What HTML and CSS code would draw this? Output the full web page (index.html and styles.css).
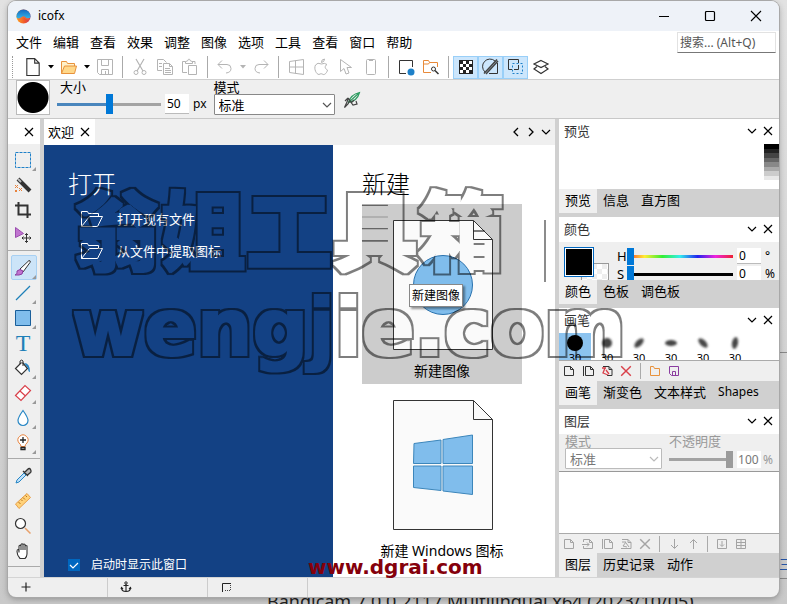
FILE: index.html
```html
<!DOCTYPE html>
<html lang="zh-CN">
<head>
<meta charset="utf-8">
<title>icofx</title>
<link rel="stylesheet" href="styles.css">
</head>
<body>
<svg class="defs" aria-hidden="true">
  <defs>
    <linearGradient id="logoTop" x1="0" y1="0" x2="0" y2="1"><stop offset="0" stop-color="#1668c0"/><stop offset="1" stop-color="#35b4e8"/></linearGradient>
    <linearGradient id="logoLow" x1="0" y1="0" x2="1" y2="0"><stop offset="0" stop-color="#ffa51f"/><stop offset=".6" stop-color="#f0542c"/><stop offset="1" stop-color="#c23a63"/></linearGradient>
    <filter id="soft" x="-50%" y="-50%" width="200%" height="200%"><feGaussianBlur stdDeviation="1"/></filter>
    <filter id="outline" x="-5%" y="-10%" width="110%" height="120%">
      <feMorphology in="SourceAlpha" operator="dilate" radius="3" result="outer"/>
      <feMorphology in="SourceAlpha" operator="dilate" radius="1" result="inner"/>
      <feComposite in="outer" in2="inner" operator="out"/>
    </filter>
    <symbol id="page" viewBox="0 0 16 16"><path d="M2.500.5h7l4 4v11h-11zM9.500.5v4h4" fill="none" stroke="currentColor"/></symbol>
    <symbol id="close" viewBox="0 0 10 10"><path d="M1 1l8 8M9 1l-8 8" fill="none" stroke="currentColor" stroke-width="1.200"/></symbol>
    <symbol id="chev" viewBox="0 0 10 10"><path d="M1 3l4 4 4-4" fill="none" stroke="currentColor" stroke-width="1.200"/></symbol>
    <symbol id="drop" viewBox="0 0 6 4"><path d="M0 0h6L3 3.500z" fill="currentColor"/></symbol>
    <symbol id="folder" viewBox="0 0 22 16"><path d="M.5 15.500V.5h6l1 2h10v3M.5 15.500h16l5-10h-13l-8 10" fill="none" stroke="currentColor"/></symbol>
    <symbol id="mini" viewBox="0 0 12 12"><path d="M1.500 1.500h6l3 3v6h-9zM7.500 1.500v3h3" fill="none" stroke="currentColor"/></symbol>
    <symbol id="minidup" viewBox="0 0 12 12"><path d="M1.500 1v10M3.500 1.500h5l3 3v6h-8zM8.500 1.500v3h3" fill="none" stroke="currentColor"/></symbol>
  </defs>
</svg>
<div class="desktop">
  <main class="window">
    <header class="titlebar">
      <svg class="logo" viewBox="0 0 16 16"><circle cx="8" cy="8" r="7.500" fill="url(#logoLow)"/><path d="M.5 8A7.500 7.500 0 0 1 15.500 8c0 1.500-1.500 2-3 2-2 0-2.500-2-4.500-2S5 10 3 10C1.500 10 .5 9.500.5 8z" fill="url(#logoTop)"/><path d="M2.500 11c3 0 3.500-2.500 5.500-2.500s2 3 6 2" fill="none" stroke="#f4703a"/></svg>
      <h1>icofx</h1>
      <div class="winctl">
        <button aria-label="最小化"><svg viewBox="0 0 12 12"><path d="M1 6.500h10" stroke="#000"/></svg></button>
        <button aria-label="最大化"><svg viewBox="0 0 12 12"><rect x="1.500" y="1.500" width="9" height="9" rx="1" fill="none" stroke="#000" stroke-width="1.200"/></svg></button>
        <button aria-label="关闭"><svg viewBox="0 0 12 12"><path d="M1 1l10 10M11 1L1 11" stroke="#000" stroke-width="1.100"/></svg></button>
      </div>
    </header>
    <nav class="menubar">
      <button>文件</button><button>编辑</button><button>查看</button><button>效果</button><button>调整</button><button>图像</button><button>选项</button><button>工具</button><button>查看</button><button>窗口</button><button>帮助</button>
      <input class="search" type="text" placeholder="搜索... (Alt+Q)" aria-label="搜索">
    </nav>
    <div class="toolbar">
      <span class="grip"></span>
      <button aria-label="新建"><svg class="i18"><use href="#page"/></svg></button>
      <button class="dd" aria-label="新建选项"><svg><use href="#drop"/></svg></button>
      <button aria-label="打开"><svg class="i18" viewBox="0 0 18 18"><path d="M1.500 15.500v-12h5l1 2h7v3" fill="#fff1c9" stroke="#e8923c"/><path d="M1.500 15.500l3-7.500h12l-2 7.500z" fill="#ffd88a" stroke="#e8923c"/></svg></button>
      <button class="dd" aria-label="打开选项"><svg><use href="#drop"/></svg></button>
      <button class="off" aria-label="保存"><svg class="i18" viewBox="0 0 18 18"><path d="M1.500 1.500h15v15h-13l-2-2zM5.500 1.500v6h7v-6M5.500 16v-4.500h7V16M9.500 13v3" fill="none" stroke="currentColor"/></svg></button>
      <span class="sep"></span>
      <button class="off" aria-label="剪切"><svg class="i18" viewBox="0 0 18 18"><path d="M5 1l7 12M13 1L6 13" fill="none" stroke="currentColor" stroke-width="1.200"/><circle cx="5" cy="14.500" r="2" fill="none" stroke="currentColor"/><circle cx="13" cy="14.500" r="2" fill="none" stroke="currentColor"/></svg></button>
      <button class="off" aria-label="复制"><svg class="i18" viewBox="0 0 18 18"><path d="M6 12.500H1.500v-11h6l3 3M7.500 5.500h6l3 3v8h-9zM13.500 5.500v3h3M9 10.500h5M9 12.500h6M9 14.500h6M3 5.500h3M3 8.500h3" fill="none" stroke="currentColor"/></svg></button>
      <button class="off" aria-label="粘贴"><svg class="i18" viewBox="0 0 18 18"><path d="M6 14.500H1.500v-11h3M11 3.500h3V6M4.500 5.500v-2l2-.5q1.500-4 3 0l2 .5v2zM7.500 7.500h8v9h-8z" fill="none" stroke="currentColor"/></svg></button>
      <span class="sep"></span>
      <button class="off" aria-label="撤销"><svg class="i18" viewBox="0 0 18 18"><path d="M6 2.500L2 6.500l4 4M2 6.500h9q4 0 4 4t-5 4.500" fill="none" stroke="currentColor"/></svg></button>
      <button class="dd off" aria-label="撤销历史"><svg><use href="#drop"/></svg></button>
      <button class="off" aria-label="重做"><svg class="i18" viewBox="0 0 18 18"><path d="M12 2.500l4 4-4 4M16 6.500H7q-4 0-4 4t5 4.500" fill="none" stroke="currentColor"/></svg></button>
      <span class="sep"></span>
      <button class="off" aria-label="Windows 图标"><svg class="i18" viewBox="0 0 18 18"><path d="M2.500 3.500l14-2v15l-14-2zM2 9h14.500M8.500 2.500v13" fill="none" stroke="currentColor"/></svg></button>
      <button class="off" aria-label="苹果图标"><svg class="i18" viewBox="0 0 18 18"><path d="M15 6.500Q12.500 4.500 9.500 6 5.500 4 3.500 7c-2 4 1 9.500 3.500 9.500 1.500-1 3-1 4 0 2 .5 4-2 4.500-4.500-3-1.500-3-4-.5-5.500zM9.500 4.500q-.5-3 3-3.500 0 3-3 3.500z" fill="none" stroke="currentColor"/></svg></button>
      <button class="off" aria-label="光标"><svg class="i18" viewBox="0 0 18 18"><path d="M3.500 1.500v12l3.500-3 2 5.500 3-1-2-5.500h4.500z" fill="none" stroke="currentColor"/></svg></button>
      <button class="off" aria-label="手机"><svg class="i18" viewBox="0 0 18 18"><rect x="4.500" y="1.500" width="9" height="15" rx="1" fill="none" stroke="currentColor"/><path d="M7 2h4" stroke="currentColor" stroke-width="2"/></svg></button>
      <span class="sep"></span>
      <button aria-label="画布"><svg class="i18" viewBox="0 0 18 18"><path d="M15.500 9V2.500h-13v13H9" fill="none" stroke="#333"/><circle cx="14" cy="14" r="3.500" fill="#1e80c8"/></svg></button>
      <button aria-label="浏览"><svg class="i18" viewBox="0 0 18 18"><path d="M9 14.500H1.500v-12h5l1 2h8V9M1.500 6h5l1-1.500" fill="none" stroke="#e88a3a"/><circle cx="11.500" cy="11" r="2" fill="none" stroke="#333"/><path d="M13 12.500l3.500 3.500" stroke="#333" stroke-width="1.500"/></svg></button>
      <span class="sep"></span>
      <button class="on" aria-label="透明网格"><svg class="i18" viewBox="0 0 18 18"><path d="M2 2h14v14H2z" fill="#222"/><path d="M6 3h3v3H6zM12 3h3v3h-3zM3 6h3v3H3zM9 6h3v3H9zM6 9h3v3H6zM12 9h3v3h-3zM3 12h3v3H3zM9 12h3v3H9z" fill="#fff"/></svg></button>
      <button class="on" aria-label="抗锯齿"><svg class="i18" viewBox="0 0 18 18"><path d="M3 14a6.500 6.500 0 0 1 10-11M7 15.500h8.500V5" fill="none" stroke="#333"/><path d="M2 15.500L15 1.500M4 16L16 3" stroke="#444" stroke-width="1.500"/></svg></button>
      <button class="on" aria-label="选区"><svg class="i18" viewBox="0 0 18 18"><path d="M5 11.500H1.500v-10h10V5" fill="none" stroke="#333"/><path d="M5.500 5.500h10v10h-10z" fill="none" stroke="#1e80c8" stroke-dasharray="2 2"/><path d="M7 11.500h4.500V7" fill="none" stroke="#333"/></svg></button>
      <button aria-label="图层"><svg class="i18" viewBox="0 0 18 18"><path d="M9 2.500l7 3.500-7 3.500L2 6zM5 8.500L2 11l7 4.500 7-4.500-3-2.500" fill="none" stroke="#333" stroke-width="1.200"/></svg></button>
    </div>
    <div class="options">
      <span class="tip"></span>
      <div class="field size">
        <label for="size">大小</label>
        <div class="row"><input id="size" class="range" type="range" value="50"><input class="num" type="text" value="50" aria-label="大小数值"><span>px</span></div>
      </div>
      <div class="field mode">
        <label for="mode">模式</label>
        <div class="selectbox"><select id="mode"><option>标准</option></select><svg><use href="#chev"/></svg></div>
      </div>
      <svg class="feather" viewBox="0 0 18 18"><path d="M16.500 1.500C12 2.500 7 6 5.500 11.500 11 10.500 15 7 16.500 1.500zL5 12" fill="none" stroke="#2f9e62" stroke-width="1.200"/><path d="M1.500 16.500l4-9 1.500 1.500-2 4zM7 10l3 4 4-1-1-3M5 7l-3 3M8 12l3-3" fill="none" stroke="#444" stroke-width="1.200"/></svg>
    </div>
    <div class="work">
      <aside class="tools">
        <div class="toolhead"><button aria-label="关闭"><svg class="i10"><use href="#close"/></svg></button></div>
        <div class="toollist">
          <button class="more" aria-label="选择"><svg viewBox="0 0 18 18"><path d="M1.500 1.500h15v15h-15z" fill="none" stroke="#1e80c8" stroke-dasharray="3 1"/></svg></button>
          <button aria-label="魔棒"><svg viewBox="0 0 18 18"><path d="M4 3l12 12" stroke="#333" stroke-width="4"/><path d="M4 3l3 3" stroke="#bbb" stroke-width="2"/><path d="M1 9l3 3M4 9l-3 3M5 12l3 3M8 12l-3 3M1 14l2 2M3 14l-2 2" stroke="#e8823c"/></svg></button>
          <button aria-label="裁剪"><svg viewBox="0 0 18 18"><path d="M4.500 1v12.500H17M1 4.500h12.500V17" fill="none" stroke="#333" stroke-width="2"/></svg></button>
          <button aria-label="移动"><svg viewBox="0 0 18 18"><path d="M1.500 1.500v10l8-4z" fill="#c074d0" stroke="#9b4eae"/><path d="M12.500 7.500v9M8 12h9M11 9l1.500-1.500L14 9M11 15l1.500 1.500L14 15M9.500 10.500L8 12l1.500 1.500M15.500 10.500L17 12l-1.500 1.500" fill="none" stroke="#333"/></svg></button>
          <span class="rule"></span>
          <button class="on more" aria-label="画笔"><svg viewBox="0 0 18 18"><path d="M6 10L15 1.500q2 0 1 2L9 13z" fill="#fff" stroke="#333"/><path d="M1 16q3-1 2-4 3-3 6 0 0 4-4 4z" fill="#c074d0" stroke="#8b3da0"/></svg></button>
          <button class="more" aria-label="直线"><svg viewBox="0 0 18 18"><path d="M2 16L16 2" stroke="#1e80b8" stroke-width="1.300"/></svg></button>
          <button class="more" aria-label="矩形"><svg viewBox="0 0 18 18"><path d="M1.500 1.500h15v15h-15z" fill="#80bdec" stroke="#1a5f9a"/></svg></button>
          <button aria-label="文字"><span class="tee">T</span></button>
          <button class="more" aria-label="填充"><svg viewBox="0 0 18 18"><path d="M7.500 3.500l-6 6 6 6 6-6-5-6" fill="#fff" stroke="#333" stroke-width="1.200"/><path d="M6 5V2q2-2 3 0v5" fill="none" stroke="#333"/><path d="M10 4q6 0 6 9-2 0-2-4z" fill="#2686c4"/></svg></button>
          <button class="more" aria-label="橡皮擦"><svg viewBox="0 0 18 18"><path d="M1.500 11.500l9.500-10 5.500 5-9.500 10zM6 7l5.500 5" fill="#fff" stroke="#d9404a" stroke-width="1.200"/></svg></button>
          <button class="more" aria-label="模糊"><svg viewBox="0 0 18 18"><path d="M9 1.500q-5 7-5 10a5 5 0 0 0 10 0q0-3-5-10z" fill="#fff" stroke="#2686c4" stroke-width="1.200"/></svg></button>
          <button class="more" aria-label="减淡"><svg viewBox="0 0 18 18"><path d="M7 12.500q0-2-2-3.500a5 5 0 1 1 8 0q-2 1.500-2 3.500z" fill="#fff" stroke="#e8823c"/><path d="M9 3v6M6 6h6M7 13.500h4v2H7z" fill="none" stroke="#222" stroke-width="1.300"/></svg></button>
          <span class="rule"></span>
          <button aria-label="取色"><svg viewBox="0 0 18 18"><path d="M2 16l1-3 7-7 2 2-7 7z" fill="#bfe0fa" stroke="#2686c4"/><path d="M9 4l5 5M10.500 5.500l3-3q2-2 3 0t0 3l-3 2.500" fill="#bbb" stroke="#333" stroke-width="1.300"/></svg></button>
          <button aria-label="测量"><svg viewBox="0 0 18 18"><path d="M1.500 12L13 1.500l3.500 4L5 16.500z" fill="#ffd27a" stroke="#e8a04a"/><path d="M4.500 10l2 2M7 7.500l1.500 1.500M9 5.500l2 2M11.500 3.500L13 5" stroke="#b87420"/></svg></button>
          <button aria-label="缩放"><svg viewBox="0 0 18 18"><circle cx="6.500" cy="6.500" r="5" fill="#fff" stroke="#333" stroke-width="1.200"/><path d="M11 11l5.500 5.500" stroke="#e8a06a" stroke-width="1.500"/></svg></button>
          <button aria-label="抓手"><svg viewBox="0 0 18 18"><path d="M6 16.500q-3-3-3-7 0-2 1-2t1 3V4q1-1.500 2 0v4V2.500q1-1.500 2 0V8 2.500q1-1 2 0V8 4q1-1 2 0v8q0 2.500-2 4.500z" fill="#fff" stroke="#333" stroke-width="1.100"/></svg></button>
          <span class="rule"></span>
        </div>
      </aside>
      <section class="doc">
        <div class="doctabs">
          <div class="doctab"><span>欢迎</span><button aria-label="关闭标签"><svg class="i10"><use href="#close"/></svg></button></div>
          <div class="docnav">
            <button aria-label="上一个"><svg class="i10" viewBox="0 0 10 10"><path d="M7 1L3 5l4 4" fill="none" stroke="#000" stroke-width="1.300"/></svg></button>
            <button aria-label="下一个"><svg class="i10" viewBox="0 0 10 10"><path d="M3 1l4 4-4 4" fill="none" stroke="#000" stroke-width="1.300"/></svg></button>
            <button aria-label="列表"><svg class="i10"><use href="#chev"/></svg></button>
          </div>
        </div>
        <div class="welcome">
          <div class="open">
            <h2>打开</h2>
            <a href="#open"><svg><use href="#folder"/></svg>打开现有文件</a>
            <a href="#extract"><svg><use href="#folder"/></svg>从文件中提取图标</a>
            <label class="startup"><input type="checkbox" checked><span class="box"><svg viewBox="0 0 12 12"><path d="M2 6l3 3 5-5" fill="none" stroke="#fff" stroke-width="1.200"/></svg></span>启动时显示此窗口</label>
          </div>
          <div class="create">
            <h2>新建</h2>
            <div class="cards">
              <button class="card sel">
                <svg viewBox="0 0 100 130"><path d="M.5.5h80l19 19v110H.5z" fill="#fafafa" stroke="#333"/><path d="M80.500.5v19h19" fill="none" stroke="#333"/><circle cx="50" cy="65" r="29.500" fill="#80bdec" stroke="#2a72ae"/></svg>
                新建图像
                <span class="tooltip" role="tooltip">新建图像</span>
              </button>
              <button class="card">
                <svg viewBox="0 0 100 130"><path d="M.5.500h80l19 19v110H.5z" fill="#fafafa" stroke="#333"/><path d="M80.500.5v19h19" fill="none" stroke="#333"/><path d="M21 43.500l27-3.500v23.500H20.500zM50 39.500l29.500-4.500v28.500H50zM20.500 66H48v24.500l-27.500-3zM50 66h29.500v28.500L50 91z" fill="#80bdec" stroke="#3c86bb"/></svg>
                新建 Windows 图标
              </button>
            </div>
            <span class="scroll"></span>
          </div>
        </div>
      </section>
      <aside class="panels">
        <section class="panel">
          <header><h3>预览</h3><button aria-label="折叠"><svg class="i10"><use href="#chev"/></svg></button><button aria-label="关闭"><svg class="i10"><use href="#close"/></svg></button></header>
          <div class="preview"><span class="ramp"></span></div>
          <div class="tabs"><button class="cur">预览</button><button>信息</button><button>直方图</button></div>
        </section>
        <section class="panel">
          <header><h3>颜色</h3><button aria-label="折叠"><svg class="i10"><use href="#chev"/></svg></button><button aria-label="关闭"><svg class="i10"><use href="#close"/></svg></button></header>
          <div class="colour">
            <div class="swatch"><span class="back"></span><span class="fore"></span></div>
            <div class="hs">
              <div class="row"><label for="hue">H</label><input id="hue" class="range hue" type="range" value="0"><input class="num" type="text" value="0" aria-label="H"><span>°</span></div>
              <div class="row"><label for="sat">S</label><input id="sat" class="range sat" type="range" value="0"><input class="num" type="text" value="0" aria-label="S"><span>%</span></div>
            </div>
          </div>
          <div class="tabs"><button class="cur">颜色</button><button>色板</button><button>调色板</button></div>
        </section>
        <section class="panel">
          <header><h3>画笔</h3><button aria-label="折叠"><svg class="i10"><use href="#chev"/></svg></button><button aria-label="关闭"><svg class="i10"><use href="#close"/></svg></button></header>
          <div class="brushes">
            <button class="pick"><svg viewBox="0 0 20 20"><circle cx="10" cy="10" r="8"/></svg>30</button>
            <button><svg viewBox="0 0 20 20"><circle cx="10" cy="10" r="5" fill="#444" filter="url(#soft)"/></svg>30</button>
            <button><svg viewBox="0 0 20 20"><ellipse cx="10" cy="10" rx="6" ry="3" transform="rotate(-45 10 10)" fill="#444" filter="url(#soft)"/></svg>30</button>
            <button><svg viewBox="0 0 20 20"><ellipse cx="10" cy="10" rx="6" ry="3" fill="#444" filter="url(#soft)"/></svg>30</button>
            <button><svg viewBox="0 0 20 20"><ellipse cx="10" cy="10" rx="6" ry="3" transform="rotate(45 10 10)" fill="#444" filter="url(#soft)"/></svg>30</button>
            <button><svg viewBox="0 0 20 20"><ellipse cx="10" cy="10" rx="6" ry="3" transform="rotate(-80 10 10)" fill="#444" filter="url(#soft)"/></svg>30</button>
          </div>
          <div class="minibar">
            <button aria-label="新建画笔"><svg><use href="#mini"/></svg></button>
            <button aria-label="复制画笔"><svg><use href="#minidup"/></svg></button>
            <button aria-label="编辑画笔"><svg viewBox="0 0 12 12"><path d="M2 1.500h6l3 3v6H6M8 1.500v3h3" fill="none" stroke="#333"/><path d="M1 3h4M4 3L2 8l5 2M5 5l3 4" fill="none" stroke="#d9404a" stroke-width="1.300"/></svg></button>
            <button class="red" aria-label="删除画笔"><svg><use href="#close"/></svg></button>
            <span class="sep"></span>
            <button aria-label="打开画笔"><svg viewBox="0 0 12 12"><path d="M1.500 10.500v-9h3l1 2h5v7z" fill="none" stroke="#e8923c"/></svg></button>
            <button aria-label="保存画笔"><svg viewBox="0 0 12 12"><path d="M1.500 1.500h9v9h-7l-2-2zM4.500 10.500v-4h3v4" fill="none" stroke="#8b3da0"/></svg></button>
          </div>
          <div class="tabs"><button class="cur">画笔</button><button>渐变色</button><button>文本样式</button><button class="latin">Shapes</button></div>
        </section>
        <section class="panel layers">
          <header><h3>图层</h3><button aria-label="折叠"><svg class="i10"><use href="#chev"/></svg></button><button aria-label="关闭"><svg class="i10"><use href="#close"/></svg></button></header>
          <div class="blend">
            <div class="field lmode"><label for="lmode">模式</label><div class="selectbox"><select id="lmode" disabled><option>标准</option></select><svg><use href="#chev"/></svg></div></div>
            <div class="field"><label for="opacity">不透明度</label><div class="row"><input id="opacity" class="range dim" type="range" value="100" disabled><input class="num" type="text" value="100" aria-label="不透明度数值" disabled><span>%</span></div></div>
          </div>
          <div class="list"></div>
          <div class="minibar off">
            <button aria-label="新建图层"><svg><use href="#mini"/></svg></button>
            <button aria-label="导入图层"><svg viewBox="0 0 12 12"><path d="M1.500 4V1.500h6l3 3v6h-9V8M7.500 1.500v3h3M0 6.500h7M5 4.500l2 2-2 2" fill="none" stroke="currentColor"/></svg></button>
            <button aria-label="复制图层"><svg><use href="#minidup"/></svg></button>
            <button aria-label="编辑图层"><svg viewBox="0 0 12 12"><path d="M2 1.500h6l3 3v6H1M8 1.500v3h3M2 4h4L3 8l4 1M6 5l3 4" fill="none" stroke="currentColor"/></svg></button>
            <button aria-label="删除图层"><svg><use href="#close"/></svg></button>
            <span class="sep"></span>
            <button aria-label="下移"><svg viewBox="0 0 12 12"><path d="M6.500 1v9M3 7l3.500 3.500L10 7" fill="none" stroke="currentColor"/></svg></button>
            <button aria-label="上移"><svg viewBox="0 0 12 12"><path d="M6.500 11V2M3 5l3.500-3.500L10 5" fill="none" stroke="currentColor"/></svg></button>
            <span class="sep"></span>
            <button aria-label="向下合并"><svg viewBox="0 0 12 12"><path d="M1.500 1.500h9v9h-9zM6 3v5M4 6.500l2 2 2-2" fill="none" stroke="currentColor"/></svg></button>
            <button aria-label="全部合并"><svg viewBox="0 0 12 12"><path d="M1.500 1.500h9v9h-9zM6 2v8M2 4.500h8M2 7.500h8" fill="none" stroke="currentColor"/></svg></button>
          </div>
          <div class="tabs"><button class="cur">图层</button><button>历史记录</button><button>动作</button></div>
        </section>
      </aside>
    </div>
    <footer class="status">
      <span><svg viewBox="0 0 12 12"><path d="M6 1.500v9M1.500 6h9" stroke="#222" stroke-width="1.200"/></svg></span>
      <span><svg viewBox="0 0 12 12"><circle cx="6" cy="2" r="1.200" fill="none" stroke="#222"/><path d="M6 3v8M3.500 4.500h5M1.500 7q0 3.500 4.500 3.500T10.500 7M1 8l.5-1.500L3 8M11 8l-.5-1.500L9 8" fill="none" stroke="#222" stroke-width="1.100"/></svg></span>
      <span><svg viewBox="0 0 12 12"><path d="M2.500 11V2.500H11" fill="none" stroke="#222"/><path d="M5 9.500h6M10.500 4v6" stroke="#444" stroke-dasharray="1 1"/></svg></span>
    </footer>
  </main>
  <p class="behind">Bandicam 7.0.0.2117 Multilingual x64 (2023/10/05)</p>
  <span class="edge upper"></span>
  <span class="edge lower">三</span>
  <p class="mark cn">翁姐工具箱</p>
  <p class="mark en">wengjie.com</p>
  <p class="site">www.dgrai.com</p>
</div>
</body>
</html>
```
FILE: styles.css
```css
* { box-sizing: border-box; }
body {
  margin: 0;
  font: 13px/18px "Noto Sans", "Noto Sans CJK SC", sans-serif;
  color: #000;
  background: #d6d6d6;
}
button, input, select { font: inherit; color: inherit; margin: 0; }
button { border: 0; padding: 0; background: none; display: flex; align-items: center; justify-content: center; }
h1, h2, h3, p { margin: 0; font-weight: 400; }
svg { display: block; }
.defs { position: absolute; width: 0; height: 0; }
.desktop {
  position: relative;
  height: 100vh;
  overflow: hidden;
  padding: 1px 8px 7px;
  background: linear-gradient(#e2e2e2, #c9c9c9);
}
.window {
  position: relative;
  z-index: 1;
  height: 100%;
  display: flex;
  flex-direction: column;
  background: #efefef;
  border-radius: 8px;
  overflow: hidden;
  box-shadow: 0 0 0 1px #a8a8a8, 0 2px 6px rgba(0, 0, 0, .3);
}
.row { display: flex; align-items: center; }
.i18 { width: 18px; height: 18px; }
.i10 { width: 10px; height: 10px; }

.titlebar { flex: none; height: 30px; display: flex; align-items: center; gap: 7px; padding-left: 8px; background: #eef2f8; }
.logo { width: 15px; height: 15px; }
.titlebar h1 { font-size: 12px; }
.winctl { margin-left: auto; display: flex; }
.winctl button { width: 46px; height: 28px; }
.winctl svg { width: 12px; height: 12px; }

.menubar { flex: none; height: 24px; display: flex; align-items: center; gap: 11px; padding: 0 3px 2px 8px; background: #fff; }
.search {
  margin-left: auto; width: 99px; height: 21px; padding: 0 2px;
  border: 1px solid #e2e2e2; border-bottom-color: #777; font-size: 12px; background: #fff;
}
.search::placeholder { color: #555; opacity: 1; }

.toolbar { flex: none; height: 25px; display: flex; align-items: center; padding-left: 4px; background: #fff; border-bottom: 1px solid #cfcfcf; color: #333; }
.toolbar button { width: 25px; height: 23px; }
.toolbar .dd { width: 11px; color: #000; }
.dd svg { width: 6px; height: 4px; }
.toolbar .off, .toolbar .dd.off { color: #b4b4b4; }
.toolbar .on { background: #cce6fc; border: 1px solid #99cff8; }
.grip { width: 1px; height: 22px; margin-right: 7px; border-left: 1px dotted #999; }
.sep { flex: none; width: 10px; height: 22px; background: linear-gradient(#aaa, #aaa) 5px 0 / 1px 100% no-repeat; }

.options { flex: none; height: 39px; display: flex; align-items: flex-start; padding-left: 8px; border-bottom: 1px solid #c8c8c8; }
.tip { width: 34px; height: 35px; background: radial-gradient(circle, #000 15px, #fff 16px); border: 1px solid #bbb; }
.field { display: flex; flex-direction: column; }
.field label { line-height: 14px; }
.options .field { margin-left: 7px; }
.size label { padding-left: 3px; }
.size .row { height: 20px; }
.size .range { width: 104px; margin-right: 4px; }
.size .num { width: 24px; height: 20px; margin-right: 4px; }
.size span, .num { font-size: 12px; }
.options .mode { width: 121px; }
.num { border: 0; border-bottom: 1px solid #bbb; background: #fff; padding: 0 2px; min-width: 0; }
.selectbox { position: relative; }
.selectbox select { display: block; width: 100%; height: 21px; padding: 0 4px; appearance: none; background: #fff; border: 1px solid #888; border-radius: 1px; }
.selectbox svg { position: absolute; right: 3px; top: 6px; width: 10px; height: 10px; color: #555; pointer-events: none; }
.feather { width: 18px; height: 18px; margin: 11px 0 0 8px; }

.range { appearance: none; height: 20px; background: linear-gradient(90deg, #4a86bd 50%, #a3a3a3 50%) center / 100% 3px no-repeat; }
.range::-webkit-slider-thumb { appearance: none; width: 7px; height: 20px; background: #0078d7; }
.range.hue { background-image: linear-gradient(90deg, #f33, #fe3, #3e3, #3ee, #22e, #e2d, #e23); }
.range.sat { background-image: linear-gradient(#000, #000); }
.range.dim { background-image: linear-gradient(#a3a3a3, #a3a3a3); }
.range.dim::-webkit-slider-thumb { background: #9b9b9b; height: 17px; }

.work { flex: 1; min-height: 0; display: grid; grid-template-columns: 32px minmax(0, 1fr) 220px; column-gap: 4px; background: #d0d0d0; }
.tools { background: #efefef; min-height: 0; }
.toolhead { height: 25px; background: #fff; display: flex; align-items: center; justify-content: flex-end; padding-right: 6px; }
.toollist { display: flex; flex-direction: column; padding-top: 3px; }
.toollist button { position: relative; width: 26px; height: 25px; margin-left: 3px; padding-right: 2px; border: 1px solid transparent; border-radius: 2px; }
.toollist svg { width: 18px; height: 18px; }
.toollist .on { background: #cce4f8; border-color: #a8d0f2; }
.more::after { content: ""; position: absolute; right: 0; bottom: 0; border: 2px solid #999; border-top-color: transparent; border-left-color: transparent; }
.rule { height: 8px; background: linear-gradient(#aaa, #aaa) 0 3px / 100% 1px no-repeat; }
.tee { font: 24px/24px "Liberation Serif", serif; color: #1e80b8; }

.doc { display: flex; flex-direction: column; min-width: 0; }
.doctabs { flex: none; height: 26px; display: flex; justify-content: space-between; background: #efefef; }
.doctab { display: flex; align-items: center; gap: 6px; padding: 0 5px 0 4px; background: #fff; }
.docnav { display: flex; gap: 5px; padding-right: 4px; }
.welcome { flex: 1; min-height: 0; display: grid; grid-template-columns: 289fr 222fr; background: #fff; }
.welcome h2 { font-size: 24px; line-height: 32px; font-weight: 300; }
.open { background: #134184; color: #fff; display: flex; flex-direction: column; padding: 23px 24px 3px; }
.open a { display: flex; align-items: center; gap: 14px; height: 32px; padding-left: 13px; color: #fff; text-decoration: none; }
.open a svg { width: 22px; height: 16px; }
.open h2 { margin-bottom: 3px; }
.startup { position: relative; margin-top: auto; display: flex; align-items: center; gap: 11px; font-size: 12px; }
.startup input { position: absolute; opacity: 0; width: 12px; height: 12px; }
.box { width: 12px; height: 12px; background: #0067c0; }
.create { position: relative; min-height: 0; padding: 23px 29px 0; overflow: hidden; }
.create h2 { margin-bottom: 4px; }
.card { position: relative; width: 160px; height: 180px; flex-direction: column; justify-content: flex-start; padding-top: 16px; gap: 12px; font-size: 14px; }
.card.sel { background: #ccc; }
.card svg { width: 100px; height: 130px; margin-left: 2px; }
.tooltip { position: absolute; left: 47px; top: 80px; padding: 2px; font-size: 12px; line-height: 17px; background: #fff; border: 1px solid #888; box-shadow: 2px 2px 2px rgba(0, 0, 0, .4); }
.scroll { position: absolute; right: 9px; top: 75px; width: 2px; height: 62px; background: #8c8c8c; }

.panels { display: flex; flex-direction: column; min-height: 0; }
.panel { flex: none; display: flex; flex-direction: column; background: #efefef; }
.panel header { flex: none; height: 25px; display: flex; align-items: center; gap: 6px; padding: 0 6px 2px 5px; background: #fff; }
.panel h3 { font-size: 13px; margin-right: auto; color: #333; }
.tabs { flex: none; display: flex; height: 28px; padding-bottom: 4px; background: #d0d0d0; }
.tabs button { padding: 0 6px 2px; }
.tabs .latin { font-size: 12px; }
.tabs .cur { background: #efefef; }
.preview { height: 45px; background: #fff; display: flex; justify-content: flex-end; }
.ramp { width: 15px; height: 45px; background: linear-gradient(#000 5px, #222 5px 9px, #444 9px 14px, #666 14px 18px, #888 18px 23px, #aaa 23px 27px, #ccc 27px 32px, #e8e8e8 32px 36px, #fff 36px); }
.colour { height: 38px; display: flex; overflow: hidden; padding: 5px 0 0 5px; }
.swatch { position: relative; flex: none; width: 46px; height: 44px; }
.fore { position: absolute; left: 0; top: 0; width: 30px; height: 30px; background: #000; border: 1px solid #0067c0; box-shadow: inset 0 0 0 1px #fff; }
.back { position: absolute; right: 1px; top: 16px; width: 28px; height: 28px; border: 1px solid #999; background: repeating-conic-gradient(#fff 0 25%, #eee 0 50%) 0 0 / 10px 10px; }
.hs { flex: 1; min-width: 0; padding-left: 7px; }
.hs .row { height: 18px; }
.hs label { width: 10px; }
.hs .range { flex: 1; min-width: 0; height: 17px; }
.hs .range::-webkit-slider-thumb { height: 17px; }
.hs .num { width: 24px; height: 16px; margin: 0 4px; }
.hs span { width: 14px; font-size: 12px; }
.brushes { height: 28px; overflow: hidden; display: flex; background: #fff; border-bottom: 1px solid #aaa; }
.brushes button { width: 32px; height: 34px; flex-direction: column; justify-content: flex-start; font-size: 11px; line-height: 12px; }
.brushes svg { width: 20px; height: 20px; margin-bottom: -1px; flex: none; }
.brushes .pick { background: #8cc3ef; }
.minibar { flex: none; height: 20px; display: flex; align-items: center; color: #333; }
.minibar button { width: 19px; height: 20px; }
.minibar svg { width: 12px; height: 12px; }
.minibar .sep { height: 16px; }
.minibar .red { color: #d9404a; }
.minibar.off { color: #a4a4a4; border-top: 1px solid #aaa; }
.layers { flex: 1; min-height: 0; }
.layers .tabs { height: 24px; padding: 0; }
.blend { flex: none; height: 38px; display: flex; gap: 7px; padding: 0 6px; color: #999; border-bottom: 1px solid #999; }
.blend .field + .field { flex: 1; min-width: 0; }
.blend .lmode { width: 97px; }
.blend select { border-color: #bbb; color: #777; opacity: 1; }
.blend .selectbox svg { color: #bbb; }
.blend .row { height: 24px; }
.blend .range { flex: 1; min-width: 0; }
.blend .num { width: 24px; height: 17px; margin: 0 2px 0 4px; padding: 0 1px; color: #777; border: 0; }
.blend span { font-size: 12px; }
.list { flex: 1; background: #fff; }

.status { flex: none; height: 20px; display: flex; border-top: 1px solid #d4d4d4; }
.status span { width: 100px; padding: 3px 12px; border-right: 1px solid #ccc; }
.status svg { width: 12px; height: 12px; }

.behind { position: absolute; left: 267px; bottom: -9px; font-size: 18px; line-height: 24px; white-space: nowrap; color: #222; }
.edge { position: absolute; right: 0; width: 8px; border-bottom: 1px solid #888; overflow: hidden; }
.upper { top: 335px; height: 18px; }
.lower { bottom: 25px; height: 24px; color: #2456a6; }
.mark { position: absolute; z-index: 2; pointer-events: none; white-space: nowrap; color: #000; filter: url(#outline); opacity: .5; }
.cn { left: 74px; top: 184px; font: 900 86px/86px "Noto Sans CJK SC", sans-serif; }
.en { left: 72px; top: 283px; font: 700 78px/90px "DejaVu Sans", sans-serif; }
.site { position: absolute; z-index: 3; left: 308px; bottom: 25px; font: 700 20px/24px "DejaVu Sans", sans-serif; color: #85000b; }
```
